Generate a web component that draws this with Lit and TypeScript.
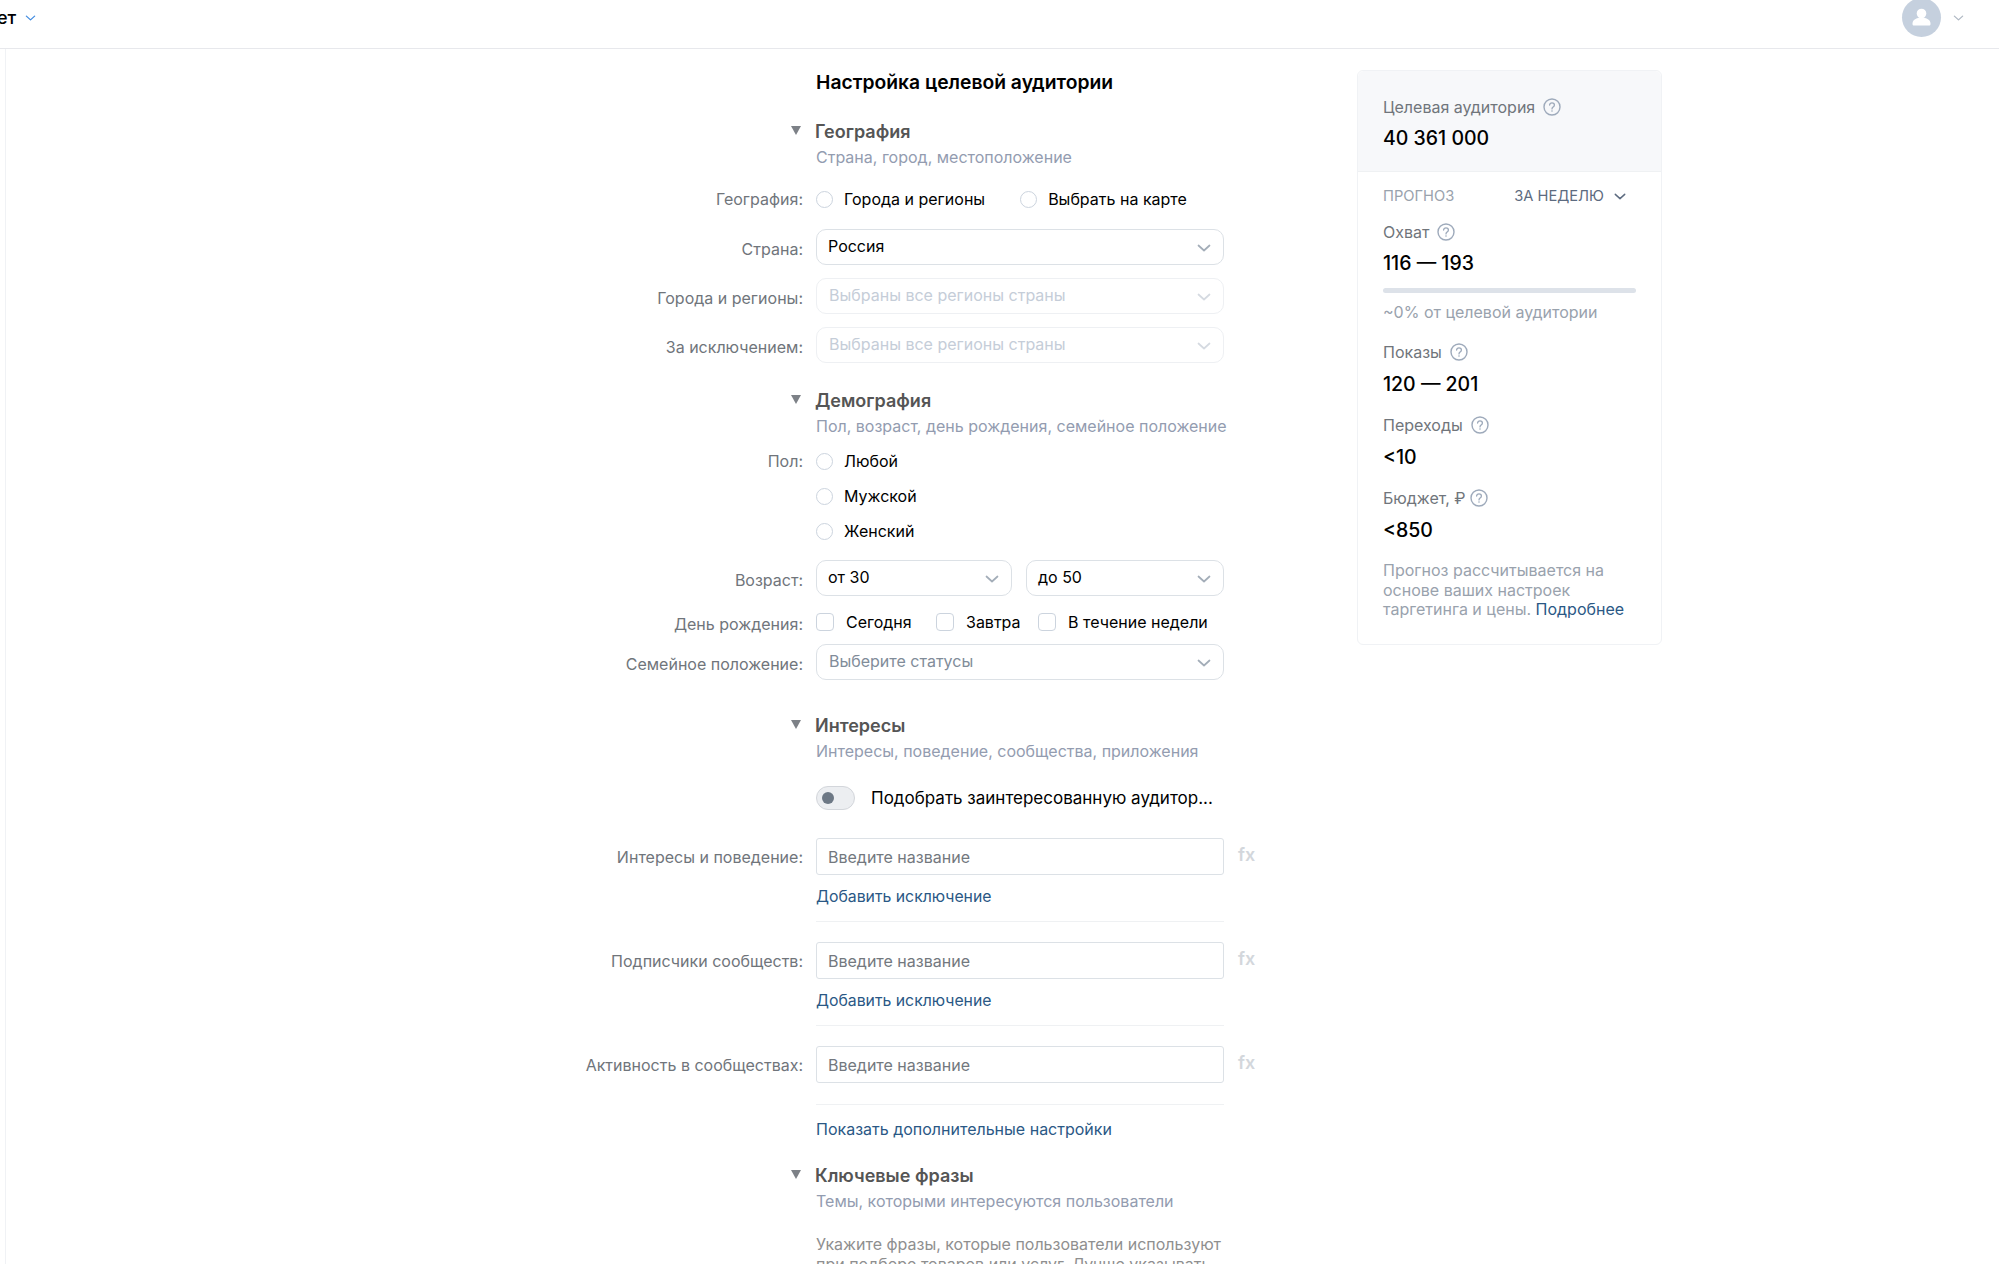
import { LitElement, html, css, svg } from 'lit';
import { customElement } from 'lit/decorators.js';

const chevron = (cls = 'chev') => html`<svg class=${cls} viewBox="0 0 14 8" fill="none"><path d="M1.5 1.5 7 6.5l5.5-5" stroke="currentColor" stroke-width="1.7" stroke-linecap="round" stroke-linejoin="round"/></svg>`;

const help = html`<svg class="help" viewBox="0 0 18 18" fill="none">
  <circle cx="9" cy="9" r="8" stroke="currentColor" stroke-width="1.4"/>
  ${svg`<path d="M6.6 7.1c0-1.4 1-2.3 2.4-2.3s2.4.9 2.4 2.2c0 1-.5 1.5-1.3 2.1-.8.6-1.1 1-1.1 1.8" stroke="currentColor" stroke-width="1.3" stroke-linecap="round"/><circle cx="9" cy="13" r=".8" fill="currentColor"/>`}
</svg>`;

@customElement('app-root')
export class AppRoot extends LitElement {
  static styles = css`
    :host {
      display: block;
      height: 100vh;
      overflow: hidden;
      background: #fff;
      font-family: Inter, 'Noto Sans', sans-serif;
      font-size: 16px;
      line-height: 20px;
      color: #000;
    }
    svg { display: block; }

    .top {
      display: flex;
      align-items: center;
      justify-content: space-between;
      box-sizing: border-box;
      height: 49px;
      padding: 0 35px 13px 0;
      border-bottom: 1px solid #e7e8ec;
    }
    .crumb { display: flex; align-items: center; margin-left: -3px; font-size: 18px; font-weight: 500; }
    .crumb svg { width: 11px; height: 6px; margin-left: 9px; color: #3f8ae0; }
    .user { display: flex; align-items: center; gap: 12px; color: #aeb7c2; }
    .avatar { width: 39px; height: 39px; border-radius: 50%; background: #c5d0de; }
    .user .chev { width: 11px; height: 6px; }

    .page { display: flex; height: calc(100vh - 49px); }
    .rail { width: 5px; flex: none; border-right: 1px solid #f0f2f5; }
    .form { width: 797px; margin-left: 554px; padding-top: 21px; flex: none; }
    .title { margin: 0 0 0 256px; font-size: 19.3px; line-height: 25px; font-weight: 600; }

    .row { display: flex; align-items: center; }
    .top-al { align-items: flex-start; }
    .lab {
      box-sizing: border-box;
      width: 243px;
      margin-right: 13px;
      flex: none;
      text-align: right;
      color: #70757b;
      white-space: nowrap;
      position: relative;
      top: 2px;
    }
    .plain { top: 0; }
    .ctl { width: 408px; flex: none; }

    .head { font-size: 18px; line-height: 22px; font-weight: 600; color: #555; }
    .head .lab { top: -2px; padding-right: 2px; display: flex; justify-content: flex-end; }
    .head .ctl { margin-left: -1px; }
    .tri { width: 0; height: 0; border: 5px solid transparent; border-top: 9px solid #7d8187; border-bottom: 0; }
    .sub { margin: 4px 0 0 256px; padding-bottom: 1px; color: #939cb0; white-space: nowrap; }

    .radios { display: flex; gap: 35px; }
    .radios.col { flex-direction: column; gap: 15px; }
    .opt { display: flex; align-items: center; gap: 11px; height: 20px; white-space: nowrap; }
    .radio { width: 15px; height: 15px; border: 1.5px solid #ccd4de; border-radius: 50%; }
    .check { width: 16px; height: 16px; border: 1.5px solid #ccd4de; border-radius: 4px; }
    .checks { display: flex; }
    .checks .opt { gap: 12px; }
    .checks .opt:nth-child(1) { width: 120px; }
    .checks .opt:nth-child(2) { width: 102px; }

    .sel {
      display: flex;
      align-items: center;
      justify-content: space-between;
      box-sizing: border-box;
      height: 36px;
      padding: 0 12px 3px 11px;
      border: 1px solid #dce1e6;
      border-radius: 10px;
      background: #fff;
    }
    .sel .chev { width: 14px; height: 8px; color: #a3adb8; position: relative; top: 2px; }
    .off { border-color: #eef0f3; color: #c5cdd8; padding-left: 12px; }
    .off .chev { color: #d5dae1; }
    .hint { color: #818c99; padding-left: 12px; }
    .pair { display: grid; grid-template-columns: 196px 198px; gap: 14px; }

    .toggle {
      box-sizing: border-box;
      width: 39px;
      height: 24px;
      padding: 4.5px 5px;
      border: 1.5px solid #d3d6db;
      border-radius: 12px;
      background: #eceef1;
      margin-right: 16px;
    }
    .toggle i { display: block; width: 12px; height: 12px; border-radius: 50%; background: #6d7885; }
    .pick { font-size: 17px; white-space: nowrap; }

    .inp {
      box-sizing: border-box;
      height: 37px;
      padding: 0 11px;
      display: flex;
      align-items: center;
      border: 1px solid #dce1e6;
      border-radius: 3px;
      color: #73787e;
    }
    .fx { margin-left: 14px; font-size: 18px; font-weight: 600; color: #d3d7dc; position: relative; top: -2px; }
    a { color: #2a5885; text-decoration: none; }
    .add { margin: 12px 0 0 256px; font-size: 15.8px; }
    .line { width: 408px; height: 1px; margin: 14px 0 20px 256px; background: #eff1f3; }
    .more { margin: 14px 0 0 256px; }
    .note { width: 408px; margin: 22px 0 0 256px; color: #8f8f8f; }

    aside {
      box-sizing: border-box;
      width: 305px;
      height: 575px;
      margin-top: 21px;
      flex: none;
      border: 1px solid #f0f2f5;
      border-radius: 6px;
      color: #70757b;
    }
    .aud { box-sizing: border-box; height: 101px; padding: 26px 25px 0; background: #f7f8fa; border-bottom: 1px solid #eff1f3; border-radius: 6px 6px 0 0; }
    .body { padding: 14px 25px 0; }
    .t { display: flex; align-items: center; gap: 8px; }
    .tight { gap: 4px; }
    .help { width: 18px; height: 18px; color: #9eaabb; }
    .v { margin-top: 10px; font-size: 19.5px; line-height: 24px; font-weight: 500; color: #000; }
    .fore { display: flex; align-items: center; justify-content: space-between; padding-right: 10px; text-transform: uppercase; font-size: 14.7px; }
    .fore span:first-child { color: #99a2ad; }
    .per { display: flex; align-items: center; gap: 10px; color: #5d6b80; }
    .per svg { width: 12px; height: 7px; }
    .m { margin-top: 19px; }
    .bar { width: 253px; height: 5px; margin-top: 13px; border-radius: 3px; background: #dde2e9; }
    .pct { margin-top: 9px; padding-bottom: 1px; color: #99a2ad; }
    .foot { margin-top: 19px; line-height: 19.5px; color: #99a2ad; }
  `;

  row(label: string, control: unknown) {
    return html`<div class="row"><div class="lab">${label}</div><div class="ctl">${control}</div></div>`;
  }

  sel(text: string, cls = '') {
    return html`<div class="sel ${cls}"><span>${text}</span>${chevron()}</div>`;
  }

  head(title: string, sub: string, top = 27) {
    return html`
      <div class="row head" style="margin-top:${top}px"><div class="lab"><div class="tri"></div></div><div class="ctl">${title}</div></div>
      <div class="sub">${sub}</div>
    `;
  }

  field(label: string, top: number) {
    return html`<div class="row" style="margin-top:${top}px">
      <div class="lab plain">${label}</div>
      <div class="ctl inp">Введите название</div>
      <div class="fx">fx</div>
    </div>`;
  }

  render() {
    return html`
      <div class="top">
        <div class="crumb">ет${chevron()}</div>
        <div class="user">
          <div class="avatar">
            <svg viewBox="0 0 39 39"><circle cx="19.5" cy="15.5" r="4.8" fill="#fff"/><path d="M10.5 25.5c0-3.5 4-6 9-6s9 2.5 9 6v.5c0 1-.6 1.5-1.5 1.5h-15c-.9 0-1.5-.5-1.5-1.5z" fill="#fff"/></svg>
          </div>
          ${chevron()}
        </div>
      </div>
      <div class="page">
        <div class="rail"></div>
        <div class="form">
          <h1 class="title">Настройка целевой аудитории</h1>

          ${this.head('География', 'Страна, город, местоположение', 26)}
          <div class="row" style="margin-top:21px"><div class="lab plain">География:</div><div class="ctl radios">
            <div class="opt"><div class="radio"></div>Города и регионы</div>
            <div class="opt"><div class="radio"></div>Выбрать на карте</div>
          </div></div>
          <div style="margin-top:20px">${this.row('Страна:', this.sel('Россия'))}</div>
          <div style="margin-top:13px">${this.row('Города и регионы:', this.sel('Выбраны все регионы страны', 'off'))}</div>
          <div style="margin-top:13px">${this.row('За исключением:', this.sel('Выбраны все регионы страны', 'off'))}</div>

          ${this.head('Демография', 'Пол, возраст, день рождения, семейное положение')}
          <div class="row top-al" style="margin-top:14px"><div class="lab plain">Пол:</div><div class="ctl radios col">
            <div class="opt"><div class="radio"></div>Любой</div>
            <div class="opt"><div class="radio"></div>Мужской</div>
            <div class="opt"><div class="radio"></div>Женский</div>
          </div></div>
          <div style="margin-top:19px">${this.row('Возраст:', html`<div class="pair">${this.sel('от 30')}${this.sel('до 50')}</div>`)}</div>
          <div style="margin-top:16px">${this.row('День рождения:', html`<div class="checks">
            <div class="opt"><div class="check"></div>Сегодня</div>
            <div class="opt"><div class="check"></div>Завтра</div>
            <div class="opt"><div class="check"></div>В течение недели</div>
          </div>`)}</div>
          <div style="margin-top:12px">${this.row('Семейное положение:', this.sel('Выберите статусы', 'hint'))}</div>

          ${this.head('Интересы', 'Интересы, поведение, сообщества, приложения', 35)}
          <div class="row pick" style="margin:24px 0 0 256px"><div class="toggle"><i></i></div>Подобрать заинтересованную аудитор...</div>
          ${this.field('Интересы и поведение:', 28)}
          <div class="add"><a>Добавить исключение</a></div>
          <div class="line"></div>
          ${this.field('Подписчики сообществ:', 0)}
          <div class="add"><a>Добавить исключение</a></div>
          <div class="line"></div>
          ${this.field('Активность в сообществах:', 0)}
          <div class="line" style="margin-top:21px;margin-bottom:0"></div>
          <div class="more"><a>Показать дополнительные настройки</a></div>

          ${this.head('Ключевые фразы', 'Темы, которыми интересуются пользователи', 26)}
          <div class="note">Укажите фразы, которые пользователи используют при подборе товаров или услуг. Лучше указывать конкретные запросы</div>
        </div>

        <aside>
          <div class="aud">
            <div class="t">Целевая аудитория ${help}</div>
            <div class="v" style="margin-top:9px">40 361 000</div>
          </div>
          <div class="body">
            <div class="fore"><span>Прогноз</span><span class="per">За неделю ${chevron('')}</span></div>
            <div class="t" style="margin-top:16px">Охват ${help}</div>
            <div class="v" style="margin-top:9px">116 — 193</div>
            <div class="bar"></div>
            <div class="pct">~0% от целевой аудитории</div>
            <div class="t m">Показы ${help}</div>
            <div class="v">120 — 201</div>
            <div class="t m">Переходы ${help}</div>
            <div class="v">&lt;10</div>
            <div class="t m tight">Бюджет, ₽ ${help}</div>
            <div class="v">&lt;850</div>
            <div class="foot">Прогноз рассчитывается на основе ваших настроек таргетинга и цены. <a>Подробнее</a></div>
          </div>
        </aside>
      </div>
    `;
  }
}
